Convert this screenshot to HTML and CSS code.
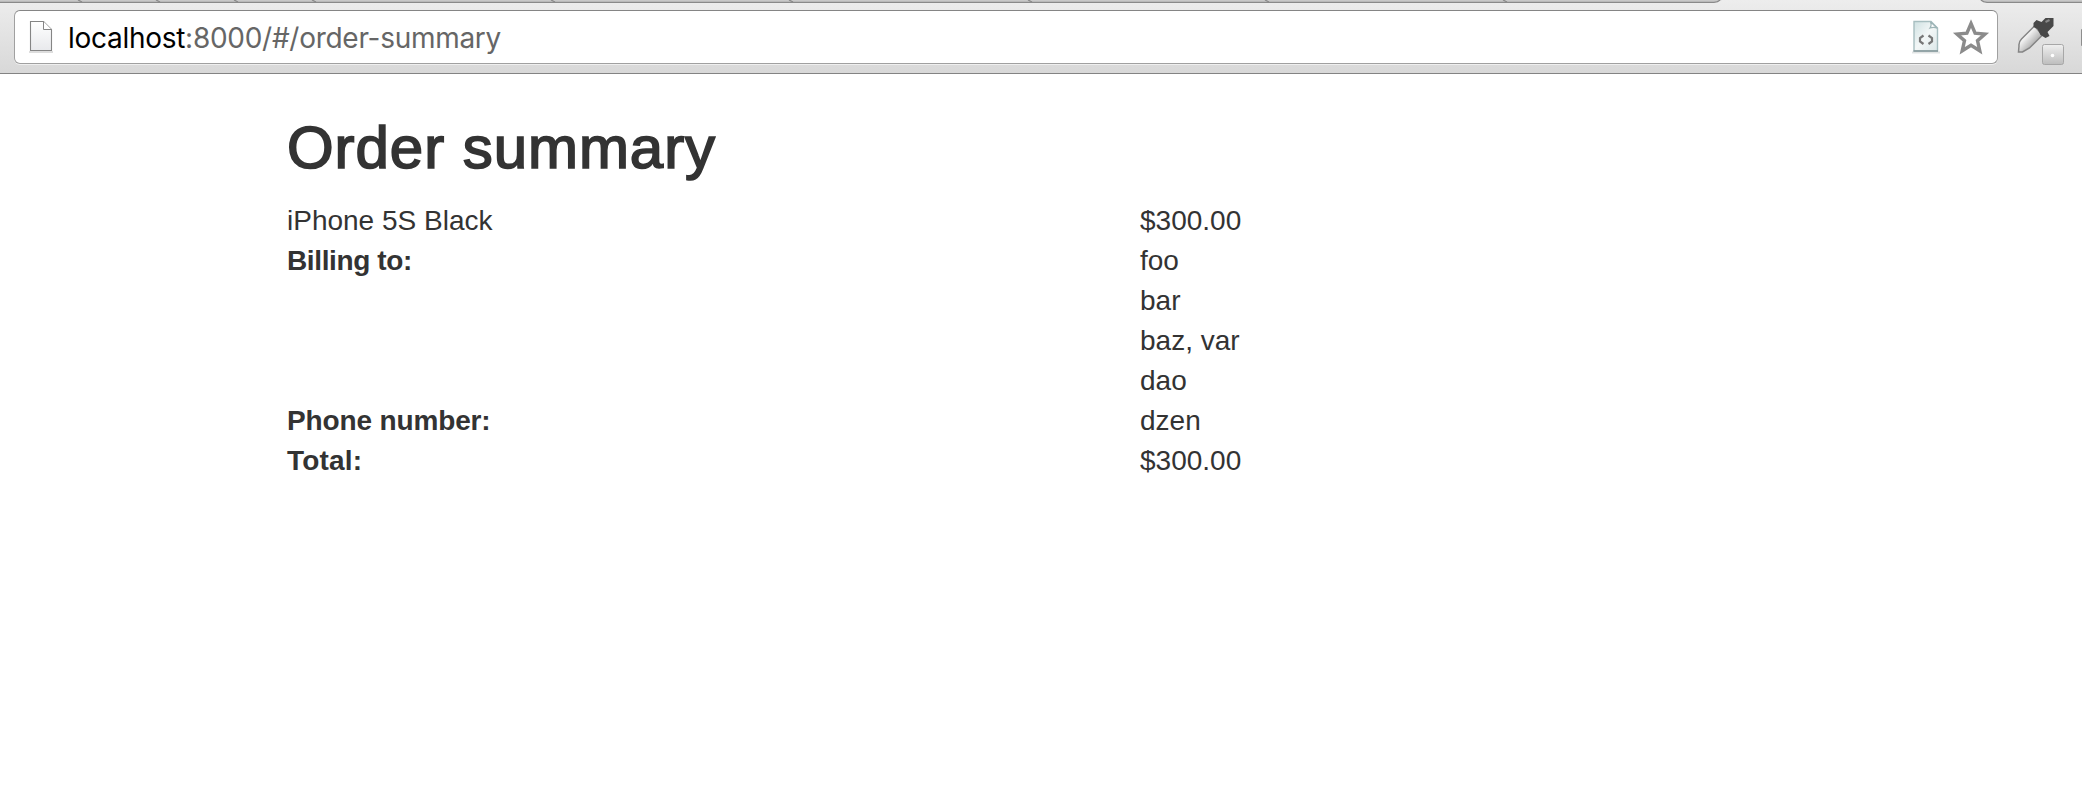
FILE: index.html
```html
<!DOCTYPE html>
<html lang="en">
<head>
<meta charset="utf-8">
<title>Order summary</title>
<link rel="stylesheet" href="styles.css">
</head>
<body>
<header class="browser">
  <svg class="tabs" width="2082" height="4" viewBox="0 0 2082 4">
    <path fill="#c8c8c8" d="M0 0H1722L1716 2H0zM1980 0H2082V2H1985z"/>
    <path fill="none" stroke="#8a8a8a" stroke-width="1.3" d="M0 2.400H1714Q1718 2 1720 0M1981 0Q1983 2 1987 2.400H2082"/>
    <path fill="none" stroke="#8a8a8a" stroke-width="1.3" d="M78 0l4 2M156 0l4 2M234 0l4 2M312 0l4 2M551 0l4 2M789 0l4 2M1028 0l4 2M1265 0l4 2M1503 0l4 2"/>
  </svg>
  <div class="toolbar">
    <div class="omnibox">
      <svg class="page-icon" width="26" height="34" viewBox="0 0 26 34">
        <defs><linearGradient id="pg" x2="0" y2="1"><stop offset="0" stop-color="#fff"/><stop offset="1" stop-color="#e8e9ec"/></linearGradient></defs>
        <path d="M1 32H25" stroke="#ddd" stroke-width="2"/>
        <path fill="url(#pg)" stroke="#858585" stroke-width="1.1" d="M2.500 1.500H15.500L23.500 9.500V30.500H2.500z"/>
        <path fill="#fff" stroke="#858585" d="M15.500 1.500V9.500H23.500"/>
      </svg>
      <div class="url"><span class="host">localhost</span>:8000/#/order-summary</div>
      <svg class="source-icon" width="30" height="34" viewBox="0 0 30 34">
        <defs><linearGradient id="sg" x2="1" y2="1"><stop offset="0" stop-color="#cfe1e2"/><stop offset=".5" stop-color="#f3f7f7"/><stop offset="1" stop-color="#dce7e8"/></linearGradient></defs>
        <path d="M1 32.500H29" stroke="#e1e4e4" stroke-width="2"/>
        <path fill="url(#sg)" stroke="#a7bec0" stroke-width="1.4" d="M3 1.500H20L26.500 8V31H3z"/>
        <path d="M2.500 31H27" stroke="#849698" stroke-width="1.4"/>
        <path fill="#fff" stroke="#9db4b6" stroke-width="1.2" d="M19.500 1.800Q21 5 19 8Q23 6.500 26.300 8.300z"/>
        <path fill="none" stroke="#777" stroke-width="2.2" d="M12.500 15.500L9 18V21.500L12.500 24M17.500 15.500L21 18V21.500L17.500 24"/>
      </svg>
      <svg class="star-icon" width="38" height="38" viewBox="0 0 38 38">
        <path fill="#fff" stroke="#8b8b8b" stroke-width="3.4" d="M19 5.500L23.100 15.200L33 16L25.500 22.700L27.800 32.800L19 27.300L10.200 32.800L12.500 22.700L5 16L14.900 15.200z"/>
      </svg>
    </div>
    <svg class="extension" width="84" height="56" viewBox="0 0 84 56">
      <defs>
        <linearGradient id="dr" x2="1" y2="1"><stop offset=".3" stop-color="#fff"/><stop offset=".7" stop-color="#aaa"/></linearGradient>
        <linearGradient id="bd" x2="0" y2="1"><stop offset="0" stop-color="#f0f0f0"/><stop offset="1" stop-color="#bdbdbd"/></linearGradient>
      </defs>
      <g transform="translate(1.500 1)">
        <path fill="url(#dr)" stroke="#858585" stroke-width="1.5" d="M35 15L22 28Q19 31 19.500 35L19 41H23L30 37L43 24z"/>
        <path fill="#484848" d="M34 12L37 9L42 11L46 7H54V15L48 21L50 25L46 27L41 24L38 18L34 16z"/>
        <path stroke="#888" stroke-width="2" d="M46 11L50 9"/>
      </g>
      <rect x="44.500" y="34.500" width="21" height="20" rx="2" fill="url(#bd)" stroke="#a7a7a7"/>
      <circle cx="54.500" cy="45.500" r="1.800" fill="#fff"/>
      <path fill="#ccc" stroke="#8d8d8d" d="M86 19.500H83.500V35.500H86"/>
    </svg>
  </div>
</header>
<main class="container">
  <h2 class="title">Order summary</h2>
  <div class="row"><div>iPhone 5S Black</div><div>$300.00</div></div>
  <div class="row"><div class="label billing">Billing to:</div><div>foo<br>bar<br>baz, var<br>dao</div></div>
  <div class="row"><div class="label phone">Phone number:</div><div>dzen</div></div>
  <div class="row"><div class="label total">Total:</div><div>$300.00</div></div>
</main>
</body>
</html>
```
FILE: styles.css
```css
* { box-sizing: border-box; }
body { margin: 0; background: #fff; color: #333; font: 28px/40px "Liberation Sans", Arial, sans-serif; overflow: hidden; }
.browser { height: 74px; background: linear-gradient(#ededed, #d8d8d8); border-bottom: 1px solid #838383; display: flex; flex-direction: column; }
.tabs { display: block; flex: none; }
.toolbar { display: flex; flex: 1; padding: 6px 0 0 14px; }
.omnibox { display: flex; align-items: center; width: 1984px; height: 54px; flex: none; padding: 0 7px 0 13px; background: #fff; border: 1px solid #a0a0a0; border-top-color: #858585; border-radius: 6px; box-shadow: 0 1px 0 #efefef; }
.page-icon { flex: none; }
.url { flex: 1; margin-left: 14px; padding-top: 2px; color: #666; font-family: Inter, sans-serif; font-size: 28px; letter-spacing: -.28px; white-space: nowrap; }
.host { color: #000; }
.source-icon { margin-right: 11px; }
.extension { flex: none; }
.container { padding: 41px 0 0 287px; }
.title { margin: 0 0 20px; font-size: 60px; line-height: 66px; font-weight: 400; letter-spacing: .95px; -webkit-text-stroke: 1.7px #333; }
.row { display: grid; grid-template-columns: 853px 1fr; }
.label { font-weight: 700; }
.billing { letter-spacing: -.38px; }
.phone { letter-spacing: -.14px; }
.total { letter-spacing: .2px; }
```
